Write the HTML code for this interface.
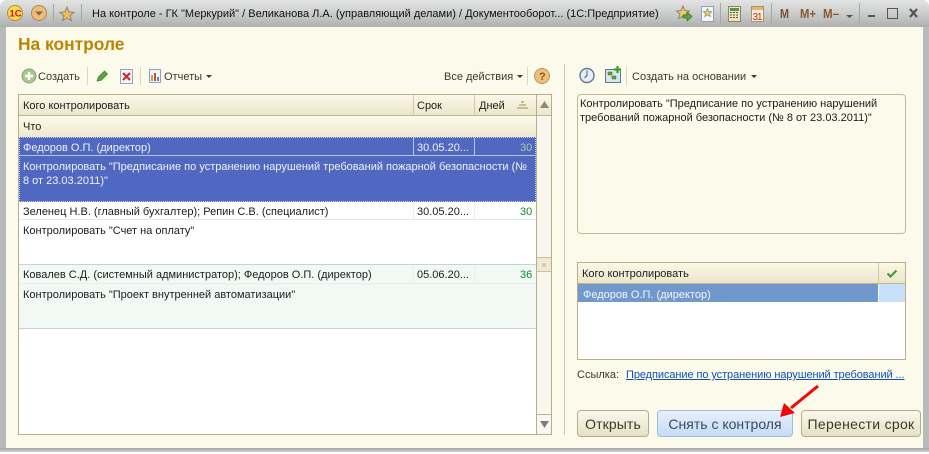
<!DOCTYPE html>
<html><head><meta charset="utf-8"><style>
html,body{margin:0;padding:0;background:#fff}
#w{position:relative;width:929px;height:454px;overflow:hidden;background:#fff;font:11px "Liberation Sans",sans-serif;color:#1c1c1c}
#w div,#w svg{position:absolute}
.t{white-space:nowrap;line-height:14px}
.h{background:linear-gradient(#fbf8e8,#ece6ca);border-bottom:1px solid #bfb68e}
.btn{box-sizing:border-box;height:27px;top:410px;border:1px solid #b5ad8a;border-radius:4px;background:linear-gradient(#fbf9ec,#e6e0c6);font-size:14px;letter-spacing:.1px;line-height:26px;text-align:center;color:#3a3a2a;white-space:nowrap}
</style></head><body><div id="w">
<div style="left:0;top:0;width:929px;height:452px;background:#b9baba;border-radius:7px 7px 0 0"></div>
<div style="left:0;top:0;width:929px;height:27px;background:linear-gradient(#e2e3e3,#d2d3d3 10px,#aeafaf);border-radius:7px 7px 0 0"></div>
<div style="left:0;top:448px;width:929px;height:4px;background:linear-gradient(#a4a5a5,#cfcfcf)"></div>
<div style="left:6px;top:27px;width:917px;height:421px;background:#fcfaeb"></div>

<svg style="left:0;top:0" width="929" height="27" viewBox="0 0 929 27">
<circle cx="15" cy="13" r="7.5" fill="#fbd94a" stroke="#b08a50"/>
<text x="9.500" y="16.500" font-family="Liberation Sans" font-weight="bold" font-size="9.500" fill="#d0161a">1C</text>
<circle cx="39" cy="13" r="7.5" fill="#eebb78" stroke="#a98a5e"/>
<path d="M35 11.500h8l-4 4z" fill="#7a6a4c"/>
<path d="M53.5 4v18M81.5 4v18M720.5 3v21M771.5 3v21M859.5 3v21" stroke="#a5a6a6"/>
<path d="M67 7l2 5 5 .4-4 3.300 1.400 5-4.400-2.700-4.400 2.700 1.400-5-4-3.300 5-.4z" fill="#f4bd58" stroke="#8f8672"/>
<path d="M683 6l2 4.500 4.500.5-3.300 3 1 4.500-4.200-2.300-4.200 2.300 1-4.500-3.300-3 4.500-.5z" fill="#eec86a" stroke="#8f8672"/>
<path d="M683 15h4v-3l5 4.500-5 4.500v-3h-4z" fill="#5aa83c" stroke="#2e7a22" stroke-width=".7"/>
<rect x="701.5" y="6.5" width="12" height="15" fill="#f2f5fa" stroke="#8ea2bd"/>
<path d="M707.500 8.500l1.300 2.800 3 .3-2.300 2 .8 3-2.800-1.600-2.800 1.600.8-3-2.300-2 3-.3z" fill="#eec86a" stroke="#85806f" stroke-width=".6"/>
<rect x="728.5" y="6.5" width="12" height="15" fill="#f3e4b8" stroke="#8a8468"/>
<rect x="730" y="8" width="9" height="3" fill="#4d9a4a"/>
<path d="M730 12.500h2M733 12.500h2M736 12.500h2M730 15h2M733 15h2M736 15h2M730 17.500h2M733 17.500h2M736 17.500h2" stroke="#555"/>
<rect x="751.5" y="6.5" width="12" height="15" fill="#fbf0dc" stroke="#a89474"/>
<rect x="752" y="7" width="11" height="3" fill="#e2b46c"/>
<text x="752.5" y="20" font-family="Liberation Sans" font-size="10" fill="#d0201a" textLength="10">31</text>
<text x="780" y="18" font-family="Liberation Sans" font-weight="bold" font-size="13" fill="#7a5030" textLength="9" lengthAdjust="spacingAndGlyphs">M</text>
<text x="800" y="18" font-family="Liberation Sans" font-weight="bold" font-size="13" fill="#8a5a30" textLength="16" lengthAdjust="spacingAndGlyphs">M+</text>
<text x="823" y="18" font-family="Liberation Sans" font-weight="bold" font-size="13" fill="#8a5a30" textLength="16" lengthAdjust="spacingAndGlyphs">M–</text>
<path d="M846 15h7l-3.500 3z" fill="#555"/>
<rect x="868" y="15" width="7" height="2" fill="#555"/>
<rect x="887.5" y="8.5" width="10" height="10" fill="none" stroke="#555"/>
<path d="M910 9l7 8M917 9l-7 8" stroke="#555" stroke-width="2.2"/>
</svg>
<div class="t" style="left:92px;top:7px;font-size:11px;color:#111">На контроле - ГК "Меркурий" / Великанова Л.А. (управляющий делами) / Документооборот... (1С:Предприятие)</div>

<div class="t" style="left:18px;top:35px;font-size:17.4px;line-height:18px;font-weight:bold;color:#bb8500">На контроле</div>

<svg style="left:0;top:60px" width="929" height="32" viewBox="0 60 929 32">
<circle cx="29" cy="76" r="7" fill="#a5c98f" stroke="#8aa27a"/><path d="M29 72v8M25 76h8" stroke="#fff" stroke-width="2.4"/>
<path d="M87.5 67v18M140.500 67v18M527.5 67v18M626.5 67v18" stroke="#dcd6bb"/>
<path d="M97 81l1.500-4 6-6 3 3-6 6z" fill="#58a83a" stroke="#3a7a28" stroke-width=".7"/>
<rect x="120.5" y="69.5" width="12" height="14" fill="#f4f6fa" stroke="#93a5bf"/>
<path d="M123 73l7 7M130 73l-7 7" stroke="#cc2a2a" stroke-width="2.2"/>
<rect x="149.5" y="69.5" width="11" height="13" fill="#f2f5fa" stroke="#8ea2bd"/>
<path d="M152 81v-6" stroke="#d0a040" stroke-width="2"/><path d="M155 81v-8" stroke="#d04a30" stroke-width="2"/><path d="M158 81v-4" stroke="#5a8fc0" stroke-width="2"/>
<path d="M206 75h6l-3 3zM517 75h6l-3 3zM751 75h6l-3 3z" fill="#3c3c2a"/>
<circle cx="542" cy="76" r="7.5" fill="#f0c078" stroke="#a89878"/>
<text x="539" y="80" font-family="Liberation Sans" font-weight="bold" font-size="11" fill="#8a5a20">?</text>
<circle cx="587" cy="75.5" r="7" fill="#e8eef6" stroke="#5f7a9c" stroke-width="1.4"/>
<path d="M587 70.500v5l-2.500 2.500" stroke="#445a7a" fill="none"/>
<rect x="605.5" y="69.5" width="15" height="13" fill="#dbe5ee" stroke="#5e7898"/>
<path d="M608 72h4v3h-4zM612 76h4v3h-4z" fill="#5fa63e" stroke="#2f6a22" stroke-width=".5"/>
<path d="M617.500 66v7M614 69.500h7" stroke="#3aa02a" stroke-width="2.2"/>
</svg>
<div class="t" style="left:38px;top:70px;color:#3a3a2a">Создать</div>
<div class="t" style="left:164px;top:70px;color:#3a3a2a">Отчеты</div>
<div class="t" style="left:444px;top:70px;color:#3a3a2a">Все действия</div>
<div class="t" style="left:632px;top:70px;color:#3a3a2a">Создать на основании</div>

<div style="left:564px;top:64px;width:1px;height:371px;background:#cfc8a4"></div>

<div style="left:18px;top:94px;width:534px;height:341px;box-sizing:border-box;border:1px solid #b8af8a;background:#fff"></div>
<div class="h" style="left:19px;top:95px;width:517px;height:20px"></div>
<div class="h" style="left:19px;top:116px;width:517px;height:21px;border-bottom:0;background:linear-gradient(#fcfaec,#eee8ce)"></div>
<div style="left:413px;top:95px;width:1px;height:20px;background:#cfc8a4"></div>
<div style="left:474px;top:95px;width:1px;height:20px;background:#cfc8a4"></div>
<div class="t" style="left:23px;top:99px">Кого контролировать</div>
<div class="t" style="left:417px;top:99px">Срок</div>
<div class="t" style="left:479px;top:99px">Дней</div>
<svg style="left:516px;top:100px" width="14" height="10"><path d="M5 1h3v2h-3zM3 4h7v2h-7zM1 7h11v2h-11z" fill="#c9bf8f"/></svg>
<div class="t" style="left:23px;top:120px">Что</div>

<div style="left:19px;top:137px;width:517px;height:65px;background:#5068c0;box-sizing:border-box;outline:1px dotted #c8d0ea;outline-offset:-1px"></div>
<div style="left:19px;top:155px;width:517px;height:1px;background:#b8c4e8"></div>
<div style="left:413px;top:138px;width:1px;height:17px;background:#b8c4e8"></div>
<div style="left:474px;top:138px;width:1px;height:17px;background:#b8c4e8"></div>
<div class="t" style="left:23px;top:141px;color:#f0f3fb">Федоров О.П. (директор)</div>
<div class="t" style="left:417px;top:141px;color:#f0f3fb">30.05.20...</div>
<div class="t" style="left:520px;top:141px;color:#9fcfa8">30</div>
<div class="t" style="left:23px;top:160px;width:510px;color:#f0f3fb;white-space:normal">Контролировать "Предписание по устранению нарушений требований пожарной безопасности (№ 8 от 23.03.2011)"</div>

<div style="left:19px;top:219px;width:517px;height:1px;background:#e8e8e8"></div>
<div style="left:413px;top:202px;width:1px;height:17px;background:#eee"></div>
<div style="left:474px;top:202px;width:1px;height:17px;background:#eee"></div>
<div class="t" style="left:23px;top:205px">Зеленец Н.В. (главный бухгалтер); Репин С.В. (специалист)</div>
<div class="t" style="left:417px;top:205px">30.05.20...</div>
<div class="t" style="left:520px;top:205px;color:#118a2a">30</div>
<div class="t" style="left:23px;top:224px">Контролировать "Счет на оплату"</div>

<div style="left:19px;top:264px;width:517px;height:65px;background:#f2f9f5;border-top:1px solid #c6d2d6;border-bottom:1px solid #c6d2d6;box-sizing:border-box"></div>
<div style="left:19px;top:283px;width:517px;height:1px;background:#e6efea"></div>
<div style="left:413px;top:265px;width:1px;height:18px;background:#e6efea"></div>
<div style="left:474px;top:265px;width:1px;height:18px;background:#e6efea"></div>
<div class="t" style="left:23px;top:268px">Ковалев С.Д. (системный администратор); Федоров О.П. (директор)</div>
<div class="t" style="left:417px;top:268px">05.06.20...</div>
<div class="t" style="left:520px;top:268px;color:#118a2a">36</div>
<div class="t" style="left:23px;top:288px">Контролировать "Проект внутренней автоматизации"</div>

<div style="left:536px;top:95px;width:1px;height:339px;background:#b8af8a"></div>
<div style="left:537px;top:95px;width:14px;height:339px;background:#f9f7ee"></div>
<div style="left:537px;top:95px;width:14px;height:20px;background:linear-gradient(#fbf8e8,#ece6ca);border-bottom:1px solid #bfb68e"></div>
<svg style="left:537px;top:100px" width="15" height="10"><path d="M7.500 1l4.500 7h-9z" fill="#8a8a80"/></svg>
<div style="left:537px;top:257px;width:14px;height:15px;box-sizing:border-box;background:#eee9d2;border-top:1px solid #c8c09c;border-bottom:1px solid #c8c09c"></div>
<div style="left:542px;top:263px;width:4px;height:4px;border-radius:2px;background:#cfcabb"></div>
<div style="left:537px;top:414px;width:14px;height:1px;background:#bfb68e"></div>
<svg style="left:537px;top:420px" width="15" height="10"><path d="M7.500 8l4.500-7h-9z" fill="#7f7f78"/></svg>

<div style="left:577px;top:94px;width:329px;height:140px;box-sizing:border-box;border:1px solid #c4bc98;border-radius:4px;background:#fcfaeb"></div>
<div class="t" style="left:580px;top:97px;width:320px;white-space:normal;line-height:14px;color:#1c1c1c">Контролировать "Предписание по устранению нарушений<br>требований пожарной безопасности (№ 8 от 23.03.2011)"</div>

<div style="left:577px;top:262px;width:329px;height:98px;box-sizing:border-box;border:1px solid #b8af8a;background:#fff"></div>
<div class="h" style="left:578px;top:263px;width:327px;height:20px"></div>
<div style="left:878px;top:263px;width:1px;height:20px;background:#cfc8a4"></div>
<div class="t" style="left:582px;top:267px">Кого контролировать</div>
<svg style="left:886px;top:269px" width="12" height="9"><path d="M1.500 4.500l3 3 6-6" fill="none" stroke="#3f9e35" stroke-width="2.2"/></svg>
<div style="left:578px;top:284px;width:300px;height:18px;background:#7098cc"></div>
<div style="left:879px;top:284px;width:26px;height:18px;background:#c8dffa"></div>
<div class="t" style="left:583px;top:288px;color:#f3f6fb">Федоров О.П. (директор)</div>

<div class="t" style="left:577px;top:368px;color:#3a3a2a">Ссылка:</div>
<div class="t" style="left:626px;top:368px;color:#1050b8;text-decoration:underline;letter-spacing:-.08px">Предписание по устранению нарушений требований ...</div>

<div class="btn" style="left:577px;width:72px">Открыть</div>
<div class="btn" style="left:657px;width:136px;border-color:#a4bcdc;background:linear-gradient(#e6f0fc,#c6dcf8);color:#3a4a5a;letter-spacing:0">Снять с контроля</div>
<div class="btn" style="left:801px;width:120px;letter-spacing:.3px">Перенести срок</div>

<svg style="left:770px;top:380px" width="60" height="42" viewBox="770 380 60 42">
<path d="M818 386l-27 22" stroke="#f00808" stroke-width="3"/>
<path d="M780 417l4-14 11 10z" fill="#f00808"/>
</svg>
</div></body></html>
